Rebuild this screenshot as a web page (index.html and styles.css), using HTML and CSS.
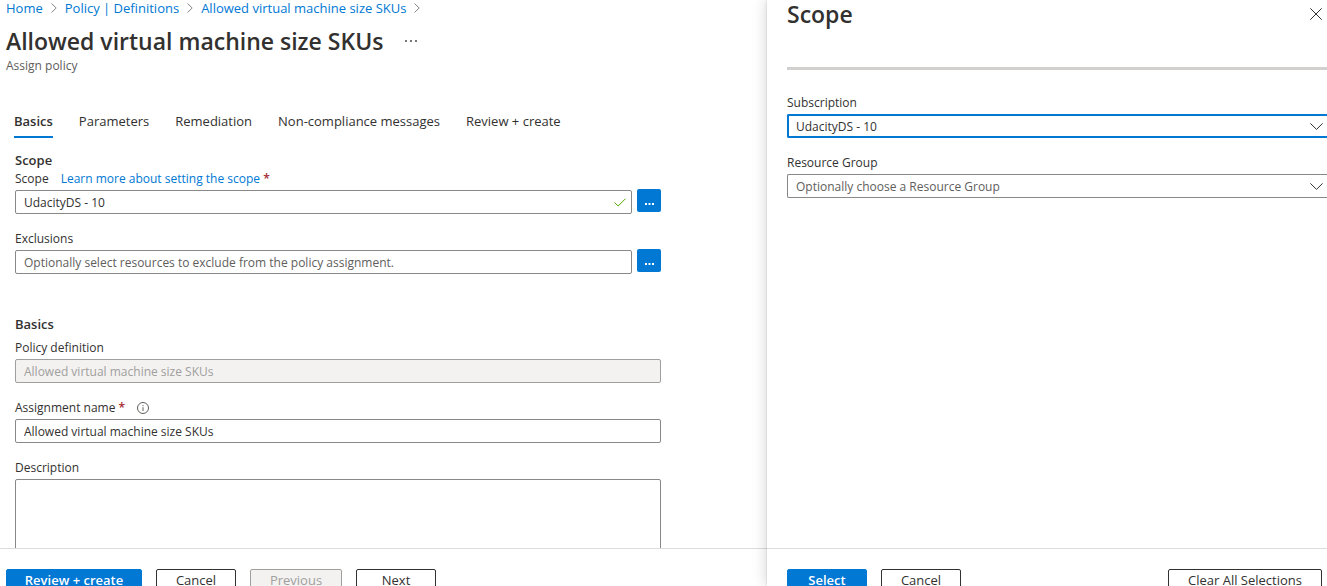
FILE: index.html
```html
<!DOCTYPE html>
<html lang="en">
<head>
<meta charset="utf-8">
<title>Allowed virtual machine size SKUs</title>
<link rel="stylesheet" href="styles.css">
</head>
<body>
<div class="shell">
  <div class="blade">
    <main class="blade-body">
      <nav class="crumbs" aria-label="Breadcrumb">
        <a href="#">Home</a>
        <svg class="crumb-sep" viewBox="0 0 6 10" aria-hidden="true"><path d="M0.5 0.5 5.2 5 0.5 9.5"/></svg>
        <a href="#">Policy | Definitions</a>
        <svg class="crumb-sep" viewBox="0 0 6 10" aria-hidden="true"><path d="M0.5 0.5 5.2 5 0.5 9.5"/></svg>
        <a href="#">Allowed virtual machine size SKUs</a>
        <svg class="crumb-sep" viewBox="0 0 6 10" aria-hidden="true"><path d="M0.5 0.5 5.2 5 0.5 9.5"/></svg>
      </nav>
      <header class="blade-head">
        <div class="title-row">
          <h1 class="title">Allowed virtual machine size SKUs</h1>
          <button class="more" type="button" aria-label="More">
            <svg class="more-icon" viewBox="0 0 12 2" aria-hidden="true"><path d="M0 0h2v2H0zM5 0h2v2H5zM10 0h2v2h-2z"/></svg>
          </button>
        </div>
        <p class="subtitle">Assign policy</p>
      </header>
      <nav class="tabs" aria-label="Steps">
        <button class="tab tab-active" type="button">Basics</button>
        <button class="tab" type="button">Parameters</button>
        <button class="tab" type="button">Remediation</button>
        <button class="tab" type="button">Non-compliance messages</button>
        <button class="tab" type="button">Review + create</button>
      </nav>
      <form class="form">
        <section class="section">
          <h2 class="section-title">Scope</h2>
          <div class="field field-picker">
            <div class="label-row">
              <label for="scope">Scope</label>
              <span class="label-link"><a href="#">Learn more about setting the scope</a> <span class="required">*</span></span>
            </div>
            <div class="picker">
              <div class="input-wrap">
                <input class="input" id="scope" type="text" value="UdacityDS - 10">
                <svg class="check" viewBox="0 0 12 9" aria-hidden="true"><path d="M0.5 4.5 4.2 8 11.5 0.7"/></svg>
              </div>
              <button class="browse" type="button" aria-label="Choose scope"><svg class="dots" viewBox="0 0 9 2" aria-hidden="true"><path d="M0 0h2v2H0zM3.5 0h2v2h-2zM7 0h2v2H7z"/></svg></button>
            </div>
          </div>
          <div class="field field-picker">
            <label for="exclusions">Exclusions</label>
            <div class="picker">
              <div class="input-wrap">
                <input class="input" id="exclusions" type="text" placeholder="Optionally select resources to exclude from the policy assignment.">
              </div>
              <button class="browse" type="button" aria-label="Choose exclusions"><svg class="dots" viewBox="0 0 9 2" aria-hidden="true"><path d="M0 0h2v2H0zM3.5 0h2v2h-2zM7 0h2v2H7z"/></svg></button>
            </div>
          </div>
        </section>
        <section class="section section-basics">
          <h2 class="section-title">Basics</h2>
          <div class="field">
            <label for="definition">Policy definition</label>
            <input class="input" id="definition" type="text" value="Allowed virtual machine size SKUs" disabled>
          </div>
          <div class="field">
            <div class="label-row">
              <label for="name">Assignment name <span class="required">*</span></label>
              <svg class="info" viewBox="0 0 12 12" aria-hidden="true"><circle cx="6" cy="6" r="5.5"/><path d="M6 5.2V9M6 3v1.1"/></svg>
            </div>
            <input class="input" id="name" type="text" value="Allowed virtual machine size SKUs">
          </div>
          <div class="field">
            <label for="description">Description</label>
            <textarea class="input textarea" id="description"></textarea>
          </div>
        </section>
      </form>
    </main>
    <footer class="actions">
      <button class="btn btn-primary btn-wide" type="button">Review + create</button>
      <button class="btn" type="button">Cancel</button>
      <button class="btn btn-medium" type="button" disabled>Previous</button>
      <button class="btn" type="button">Next</button>
    </footer>
  </div>
  <aside class="blade panel">
    <div class="panel-body">
      <header class="panel-head">
        <h2 class="title">Scope</h2>
        <button class="close" type="button" aria-label="Close"><svg class="close-icon" viewBox="0 0 12 12" aria-hidden="true"><path d="M0.3 0.3 11.7 11.7M11.7 0.3 0.3 11.7"/></svg></button>
      </header>
      <div class="panel-fields">
        <div class="field">
          <label for="subscription">Subscription</label>
          <div class="select-wrap">
            <select class="select select-focus" id="subscription"><option>UdacityDS - 10</option></select>
            <svg class="chevron" viewBox="0 0 13 7" aria-hidden="true"><path d="M0.4 0.4 6.5 6.4 12.6 0.4"/></svg>
          </div>
        </div>
        <div class="field">
          <label for="group">Resource Group</label>
          <div class="select-wrap">
            <select class="select select-empty" id="group"><option>Optionally choose a Resource Group</option></select>
            <svg class="chevron" viewBox="0 0 13 7" aria-hidden="true"><path d="M0.4 0.4 6.5 6.4 12.6 0.4"/></svg>
          </div>
        </div>
      </div>
    </div>
    <footer class="actions panel-actions">
      <button class="btn btn-primary" type="button">Select</button>
      <button class="btn" type="button">Cancel</button>
      <button class="btn btn-clear" type="button">Clear All Selections</button>
    </footer>
  </aside>
</div>
</body>
</html>
```
FILE: styles.css
```css
* {
  box-sizing: border-box;
}

body {
  margin: 0;
  color: #323130;
  background: #fff;
  font-family: "Open Sans", "Noto Sans", sans-serif;
  font-size: 13px;
  line-height: 18px;
}

h1, h2, p {
  margin: 0;
}

button, input, select, textarea {
  font: inherit;
  color: inherit;
}

button {
  padding: 0;
  border: 0;
  background: none;
}

a {
  color: #0078d4;
  text-decoration: none;
}

svg {
  display: block;
  flex: none;
  fill: none;
}

.shell {
  display: grid;
  grid-template-columns: minmax(0, 1fr) 560px;
  height: 100vh;
  overflow: hidden;
}

.blade {
  display: grid;
  grid-template-rows: minmax(0, 1fr) 38px;
  min-width: 0;
  min-height: 0;
}

.blade-body {
  overflow: hidden;
}

.crumbs {
  display: flex;
  align-items: center;
  gap: 8px;
  padding-left: 6px;
  line-height: 16px;
}

.crumb-sep {
  width: 6px;
  height: 10px;
  stroke: #8a8886;
}

.blade-head {
  padding: 9px 6px 0;
}

.title-row {
  display: flex;
  align-items: center;
  gap: 22px;
}

.title {
  font-size: 23px;
  font-weight: 600;
  line-height: 32px;
}

.more-icon {
  width: 12px;
  height: 2px;
  fill: #797775;
}

.subtitle {
  color: #605e5c;
  font-size: 12px;
  line-height: 18px;
}

.tabs {
  display: flex;
  gap: 26px;
  padding: 29px 14px 0;
}

.tab {
  padding: 8px 0 6px;
  border-bottom: 2px solid transparent;
}

.tab-active {
  border-color: #0078d4;
  font-weight: 600;
}

.form {
  max-width: 676px;
  padding: 13px 15px 0;
}

.section-title {
  font-size: 13px;
  font-weight: 600;
  line-height: 18px;
}

.section-basics {
  padding-top: 26px;
}

.section-basics .section-title {
  padding-bottom: 5px;
}

.field {
  display: flex;
  flex-direction: column;
  gap: 1px;
  margin-bottom: 15px;
  font-size: 12px;
  line-height: 20px;
}

.field-picker {
  gap: 0;
}

.label-row {
  display: flex;
  align-items: center;
  gap: 12px;
}

.required {
  color: #a4262c;
  font-weight: 600;
}

.info {
  width: 12px;
  height: 12px;
  stroke: #605e5c;
}

.picker {
  display: flex;
  align-items: flex-start;
  gap: 5px;
}

.input-wrap {
  position: relative;
  flex: 1;
  padding-top: 1px;
}

.input {
  display: block;
  width: 100%;
  height: 24px;
  padding: 0 8px;
  border: 1px solid #8a8886;
  border-radius: 2px;
  background: #fff;
}

.input::placeholder {
  color: #605e5c;
  opacity: 1;
}

.input:disabled {
  color: #a19f9d;
  background: #f3f2f1;
  border-color: #a19f9d;
}

.textarea {
  height: 96px;
  resize: none;
}

.check {
  position: absolute;
  top: 9px;
  right: 6px;
  width: 12px;
  height: 9px;
  stroke: #57a300;
}

.browse {
  display: flex;
  align-items: flex-end;
  justify-content: center;
  width: 24px;
  height: 23px;
  padding-bottom: 7px;
  border-radius: 2px;
  background: #0078d4;
}

.dots {
  width: 9px;
  height: 2px;
  fill: #fff;
}

.actions {
  display: flex;
  align-items: flex-start;
  gap: 14px;
  padding: 20px 6px 0;
  border-top: 1px solid #dcdcdc;
  overflow: hidden;
}

.btn {
  flex: none;
  width: 80px;
  height: 24px;
  padding-bottom: 2px;
  border: 1px solid #323130;
  border-radius: 2px;
  background: #fff;
  line-height: 20px;
}

.btn-primary {
  border-color: #0078d4;
  background: #0078d4;
  color: #fff;
  font-weight: 600;
}

.btn-wide {
  width: 136px;
}

.btn-medium {
  width: 92px;
}

.btn:disabled {
  border-color: #a19f9d;
  background: #f3f2f1;
  color: #a19f9d;
}

.panel {
  background: #fff;
  box-shadow: 0 0 14px rgba(0, 0, 0, 0.18), 0 0 2px rgba(0, 0, 0, 0.16);
}

.panel-body {
  padding-left: 20px;
  overflow: hidden;
}

.panel-head {
  display: flex;
  align-items: flex-start;
  justify-content: space-between;
  height: 70px;
  padding-right: 5px;
  border-bottom: 3px solid #d2d0ce;
}

.panel-head .title {
  line-height: 28px;
}

.close {
  padding-top: 8px;
}

.close-icon {
  width: 12px;
  height: 12px;
  stroke: #323130;
}

.panel-fields {
  padding-top: 23px;
}

.select-wrap {
  position: relative;
}

.select {
  display: block;
  width: 100%;
  height: 24px;
  padding: 1px 8px 0;
  border: 1px solid #8a8886;
  border-right: 0;
  border-radius: 2px 0 0 2px;
  background: #fff;
  appearance: none;
}

.select-focus {
  padding-left: 7px;
  border-color: #0078d4;
  border-width: 2px 0 2px 2px;
}

.select-empty {
  color: #605e5c;
}

.chevron {
  position: absolute;
  top: 9px;
  right: 4px;
  width: 13px;
  height: 7px;
  stroke: #323130;
  pointer-events: none;
}

.panel-actions {
  padding-left: 20px;
  padding-right: 5px;
}

.btn-clear {
  width: 154px;
  margin-left: auto;
}
```
